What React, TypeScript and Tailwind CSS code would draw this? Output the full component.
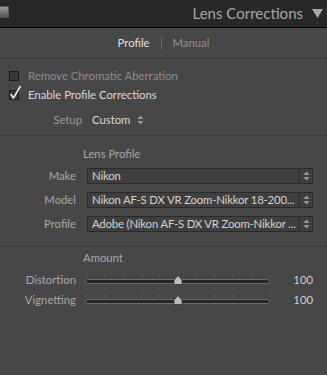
import React from "react";

const font = { fontFamily: '"Lato", "Liberation Sans", sans-serif' };

function Spinner() {
  return (
    <svg width="7" height="10" viewBox="0 0 7 10" className="block">
      <path d="M3.5 0.5 L6.5 4 H0.5 Z" fill="#9a9a9a" />
      <path d="M3.5 9.5 L6.5 6 H0.5 Z" fill="#9a9a9a" />
    </svg>
  );
}

function Select({ label, value }: { label: string; value: string }) {
  return (
    <div className="flex items-center h-[16px]">
      <div className="w-[76px] text-right text-[11.3px] text-[#a8a8a8]">{label}</div>
      <div className="ml-[11px] flex h-[16px] w-[226px] border border-[#2a2a2a] bg-[#3f3f3f]">
        <div className="flex-1 pl-[4px] pr-[2px] text-[11.3px] tracking-[-0.15px] leading-[14px] text-[#d4d4d4] whitespace-nowrap overflow-hidden">{value}</div>
        <div className="w-[13px] border-l border-[#2a2a2a] flex items-center justify-center">
          <Spinner />
        </div>
      </div>
    </div>
  );
}

function Slider({ label }: { label: string }) {
  const ticks = [0, 1, 2, 3, 4, 5, 6, 7, 8, 9, 10];
  return (
    <div className="flex items-center h-[20px]">
      <div className="w-[76px] text-right text-[11.3px] text-[#a8a8a8]">{label}</div>
      <div className="relative ml-[9px] w-[185px] h-[16px]">
        <div className="absolute left-[1px] right-[1px] top-[3px] h-[2px]">
          {ticks.map((t) => (
            <div
              key={t}
              className="absolute top-0 w-px h-[2px] bg-[#5e5e5e]"
              style={{ left: `${(t * 100) / 10}%` }}
            />
          ))}
        </div>
        <div className="absolute left-0 right-0 top-[7px] h-[5px] rounded-full border border-[#6a6a6a] bg-[#262626]" />
        <svg className="absolute top-[3px]" style={{ left: 88 }} width="10" height="10" viewBox="0 0 10 10">
          <path d="M5 0.5 L9 5 V9.5 H1 V5 Z" fill="#bdbdbd" stroke="#333" strokeWidth="0.8" />
        </svg>
      </div>
      <div className="flex-1 text-right pr-[14px] text-[11.3px] text-[#cfcfcf]">100</div>
    </div>
  );
}

export default function App() {
  return (
    <div className="w-[327px] h-[375px] bg-[#474747] overflow-hidden" style={font}>
      <div className="h-[28px] bg-[#282828] border-b border-black flex items-center justify-between">
        <div className="w-[9px] h-[12px] -mt-[3px] border border-[#555] border-l-0 bg-gradient-to-b from-[#9a9a9a] to-[#555]" />
        <div className="flex items-center">
          <span className="text-[15px] text-[#a6a6a6]">Lens Corrections</span>
          <svg className="ml-[9px] mr-[4px]" width="11" height="9" viewBox="0 0 11 9">
            <path d="M0 0 H11 L5.5 9 Z" fill="#a8a8a8" />
          </svg>
        </div>
      </div>
      <div className="h-[31px] flex items-center justify-center border-b border-[#3a3a3a] text-[11.3px]">
        <span className="text-[#e0e0e0]">Profile</span>
        <span className="mx-[11px] w-px h-[12px] bg-[#5a6a80]" />
        <span className="text-[#909090]">Manual</span>
      </div>
      <div className="pt-[8px] pb-[6px] border-b border-[#3a3a3a]">
        <div className="flex items-center h-[18px] pl-[9px]">
          <div className="w-[10px] h-[10px] border border-[#1a1a1a] bg-[#3a3a3a]" />
          <span className="ml-[9px] text-[11.3px] text-[#8c8c8c]">Remove Chromatic Aberration</span>
        </div>
        <div className="flex items-center h-[18px] pl-[9px] mt-[1px]">
          <div className="relative w-[10px] h-[10px] border border-[#1a1a1a] bg-[#3a3a3a]">
            <svg className="absolute -top-[6px] -left-[1px]" width="13" height="15" viewBox="0 0 13 15">
              <path d="M1.5 9 L4.5 13 L11.5 1" fill="none" stroke="#e6e6e6" strokeWidth="1.6" />
            </svg>
          </div>
          <span className="ml-[9px] text-[11.3px] text-[#d8d8d8]">Enable Profile Corrections</span>
        </div>
        <div className="flex items-center h-[18px] mt-[7px]">
          <span className="w-[82px] text-right text-[11.3px] text-[#9a9a9a]">Setup</span>
          <span className="ml-[10px] text-[11.3px] text-[#d8d8d8]">Custom</span>
          <span className="ml-[7px]"><Spinner /></span>
        </div>
      </div>
      <div className="pt-[9px] pb-[14px] border-b border-[#3a3a3a]">
        <div className="pl-[83px] text-[11.3px] text-[#a8a8a8] h-[18px] leading-[18px]">Lens Profile</div>
        <div className="mt-[5px] flex flex-col gap-[8px]">
          <Select label="Make" value="Nikon" />
          <Select label="Model" value="Nikon AF-S DX VR Zoom-Nikkor 18-200..." />
          <Select label="Profile" value="Adobe (Nikon AF-S DX VR Zoom-Nikkor ..." />
        </div>
      </div>
      <div className="pt-[2px]">
        <div className="pl-[83px] text-[11.3px] text-[#a8a8a8] h-[18px] leading-[18px]">Amount</div>
        <div className="mt-[3px]">
          <Slider label="Distortion" />
          <Slider label="Vignetting" />
        </div>
      </div>
    </div>
  );
}
